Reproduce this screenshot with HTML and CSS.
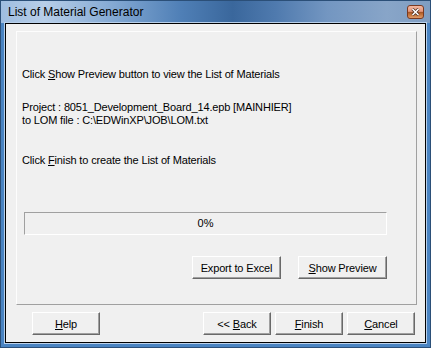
FILE: index.html
```html
<!DOCTYPE html>
<html lang="en">
<head>
<meta charset="UTF-8">
<title>List of Material Generator</title>
<link rel="stylesheet" href="styles.css">
</head>
<body>

<div class="window">
  <div class="titlebar">
    <span class="title">List of Material Generator</span>
    <span class="close">
      <svg width="9" height="8" viewBox="0 0 9 8">
        <path d="M1.5 1 L7.5 7 M7.5 1 L1.5 7" stroke="#4a2a1a" stroke-width="3"/>
        <path d="M1.5 1 L7.5 7 M7.5 1 L1.5 7" stroke="#fff" stroke-width="1.6"/>
      </svg>
    </span>
  </div>

  <div class="frame">
    <div class="client">
      <div class="group">
        <p class="line intro">Click <u>S</u>how Preview button to view the List of Materials</p>
        <p class="line project">Project : 8051_Development_Board_14.epb [MAINHIER]<br>to LOM file : C:\EDWinXP\JOB\LOM.txt</p>
        <p class="line finish">Click <u>F</u>inish to create the List of Materials</p>

        <div class="progress">0%</div>

        <div class="actions">
          <button class="btn wide">Export to Excel</button>
          <button class="btn wide"><u>S</u>how Preview</button>
        </div>
      </div>

      <div class="nav">
        <button class="btn help"><u>H</u>elp</button>
        <button class="btn back">&lt;&lt; <u>B</u>ack</button>
        <button class="btn"><u>F</u>inish</button>
        <button class="btn"><u>C</u>ancel</button>
      </div>
    </div>
  </div>
</div>

</body>
</html>
```

FILE: styles.css
```css
body {
  margin: 0;
  font-family: "Liberation Sans", Arial, sans-serif;
  font-size: 11px;
  color: #000;
  background-color: #fff;
}

.window {
  width: 431px;
  height: 348px;
  box-sizing: border-box;
  border: 1px solid #2b4f78;
  background-color: #4a84c2;
  display: flex;
  flex-direction: column;
}

.titlebar {
  height: 22px;
  display: flex;
  align-items: center;
  background: linear-gradient(to right, #9fbde0 0%, #b7cee8 10%, #84a9d3 26%, #4f7fb6 42%, #3a679c 54%, #4f7aae 64%, #7396c1 76%, #88a5c8 90%, #7f9dc2 100%);
}

.title {
  margin-left: 7px;
  font-size: 12px;
  line-height: 14px;
  flex: 1;
}

.close {
  align-self: flex-start;
  margin-top: 4px;
  margin-right: 6px;
  width: 17px;
  height: 14px;
  box-sizing: border-box;
  border: 1px solid #7a3a22;
  border-radius: 3px;
  background: linear-gradient(to bottom, #f2b7a0 0%, #e6977c 45%, #9a4f26 50%, #b8652e 62%, #df9b68 100%);
  display: flex;
  align-items: center;
  justify-content: center;
}

.frame {
  flex: 1;
  display: flex;
  padding: 0 4px 4px 4px;
}

.client {
  flex: 1;
  border: 1px solid #000;
  box-shadow: 0 0 0 1px #b9d0ea;
  background-color: #f0f0f0;
  padding: 7px 8px 0 10px;
  display: flex;
  flex-direction: column;
}

.group {
  height: 274px;
  box-sizing: border-box;
  border: 1px solid;
  border-color: #fdfdfd #a0a0a0 #a0a0a0 #fdfdfd;
  padding: 36px 0 0 5px;
}

.line {
  margin: 0;
  line-height: 13px;
  letter-spacing: -0.15px;
  white-space: nowrap;
}

.project {
  margin-top: 20px;
}

.finish {
  margin-top: 27px;
}

.progress {
  margin: 45px 0 0 2px;
  width: 363px;
  height: 23px;
  box-sizing: border-box;
  border: 1px solid;
  border-color: #a0a0a0 #fff #fff #a0a0a0;
  text-align: center;
  line-height: 21px;
}

.actions {
  margin: 21px 29px 0 0;
  display: flex;
  justify-content: flex-end;
  gap: 17px;
}

.btn {
  font-family: inherit;
  font-size: 11px;
  letter-spacing: -0.15px;
  color: #000;
  width: 68px;
  height: 23px;
  padding: 0;
  box-sizing: border-box;
  background-color: #f0f0f0;
  border: 1px solid;
  border-color: #fff #696969 #696969 #fff;
  box-shadow: inset -1px -1px 0 #a0a0a0;
}

.btn.wide {
  width: 89px;
}

.nav {
  margin: 7px 2px 0 0;
  display: flex;
  gap: 4px;
}

.help {
  margin-left: 16px;
}

.back {
  margin-left: auto;
}
```
